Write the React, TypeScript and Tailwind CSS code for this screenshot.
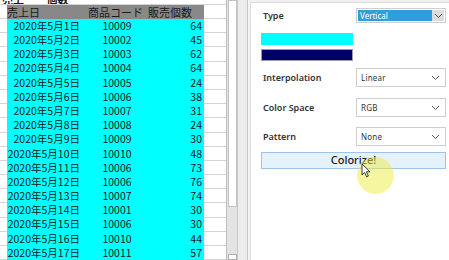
import React from "react";

const rows: [number, string, number][] = [
  [1, "10009", 64],
  [2, "10002", 45],
  [3, "10003", 62],
  [4, "10004", 64],
  [5, "10005", 24],
  [6, "10006", 38],
  [7, "10007", 31],
  [8, "10008", 24],
  [9, "10009", 30],
  [10, "10010", 48],
  [11, "10006", 73],
  [12, "10006", 76],
  [13, "10007", 74],
  [14, "10001", 30],
  [15, "10006", 30],
  [16, "10010", 44],
  [17, "10011", 57],
];

const jp = "font-['MS_PGothic','Noto_Sans_CJK_JP',sans-serif]";
const ui = "font-['Noto_Sans','Open_Sans',sans-serif]";

function Chevron() {
  return (
    <svg width="9" height="6" viewBox="0 0 9 6" className="shrink-0">
      <path d="M1 1l3.5 3.5L8 1" fill="none" stroke="#555" strokeWidth="1" />
    </svg>
  );
}

function Select({ value }: { value: string }) {
  return (
    <div className="w-[90px] h-[19px] border border-[#cfcfcf] bg-white flex items-center justify-between pl-[4px] pr-[5px]">
      <span className="text-[8px] text-[#333] tracking-[0.2px]">{value}</span>
      <Chevron />
    </div>
  );
}

function Sheet() {
  return (
    <div className={`w-[226px] h-[260px] flex flex-col text-[10.5px] text-[#1a1a1a] whitespace-nowrap ${jp}`}>
      {/* partially visible title row */}
      <div className="h-[5px] shrink-0 overflow-hidden relative border-b border-[#d4d4d4]">
        <div className="absolute left-[2px] bottom-[-1px] leading-[11px] font-bold text-[11px]">
          売上 <span className="ml-[20px]">個数</span>
        </div>
      </div>
      <div className="h-[14px] shrink-0 flex">
        <div className="w-[7px] border-b border-[#d4d4d4]" />
        <div className="w-[197px] bg-[#888888] flex items-center leading-none text-[11px]">
          <span className="w-[79px]">売上日</span>
          <span className="w-[62px] pl-[2px]">商品コード</span>
          <span className="flex-1">販売個数</span>
        </div>
        <div className="w-[22px] border-b border-[#d4d4d4]" />
      </div>
      {rows.map(([d, code, n]) => (
        <div key={d} className="h-[14.2px] shrink-0 flex leading-none">
          <div className="w-[7px] border-b border-[#d4d4d4]" />
          <div className="w-[197px] bg-[#00ffff] flex items-center">
            <span className="w-[79px] text-right pr-[6px]">2020年5月{d}日</span>
            <span className="w-[62px] text-center">{code}</span>
            <span className="flex-1 text-right pr-[2px]">{n}</span>
          </div>
          <div className="w-[22px] border-b border-[#d4d4d4]" />
        </div>
      ))}
    </div>
  );
}

function Scrollbars() {
  return (
    <div className="flex h-[260px] border-l border-[#bdbdbd]">
      <div className="w-[10px] bg-[#e3e3e3] flex flex-col justify-between pl-[1px]">
        <div className="h-[207px] w-[9px] bg-white border border-[#c4c4c4]" />
        <div className="h-[6px] w-[9px] bg-white border border-[#b0b0b0]" />
      </div>
      <div className="w-[11px] bg-[#ececec] border-l border-[#c8c8c8] border-r" />
      <div className="w-[2px] bg-[#f4f4f4]" />
    </div>
  );
}

function Panel() {
  return (
    <div className={`flex-1 h-[260px] pt-[2px] bg-[#f0f0f0] ${ui}`}>
      <div className="h-full bg-white border-t border-l border-[#dcdcdc] pl-[10px] pr-[4px] pt-[5px] relative">
        <div className="flex items-center justify-between h-[15px]">
          <span className="pl-[2px] text-[9px] font-semibold text-[#333]">Type</span>
          <div className="w-[90px] h-[15px] border border-[#cfcfcf] flex items-center p-[1px]">
            <div className="flex-1 h-full bg-[#2f9fdb] text-white text-[8px] leading-none flex items-center pl-[2px]">
              Vertical
            </div>
            <div className="w-[12px] h-full bg-[#dcdcdc] flex items-center justify-center">
              <Chevron />
            </div>
          </div>
        </div>
        <div className="mt-[10px] w-[92px] h-[12px] bg-[#00ffff]" />
        <div className="mt-[4px] w-[92px] h-[12px] bg-[#000066] border border-[#9a9ab0]" />
        <div className="mt-[7px] flex items-center justify-between h-[19px]">
          <span className="pl-[2px] text-[9px] font-semibold text-[#333]">Interpolation</span>
          <Select value="Linear" />
        </div>
        <div className="mt-[11px] flex items-center justify-between h-[19px]">
          <span className="pl-[2px] text-[9px] font-semibold text-[#333]">Color Space</span>
          <Select value="RGB" />
        </div>
        <div className="mt-[10px] flex items-center justify-between h-[19px]">
          <span className="pl-[2px] text-[9px] font-semibold text-[#333]">Pattern</span>
          <Select value="None" />
        </div>
        <div className="mt-[6px] w-[185px] h-[17px] bg-[#e5f1fb] border border-[#9fc3e6] flex items-center justify-center text-[11px] font-medium text-[#1a1a1a]">
          Colorize!
        </div>
        {/* click highlight + cursor */}
        <div className="absolute left-[106px] top-[154px] w-[37px] h-[37px] rounded-full bg-[#eeee44]/50" />
        <svg className="absolute left-[110px] top-[160px]" width="10" height="15" viewBox="0 0 10 15">
          <path d="M1 1v11l2.6-2.5 2 4.3 1.8-.8-2-4.2H9z" fill="#fff" stroke="#222" strokeWidth="0.9" strokeLinejoin="round" />
        </svg>
      </div>
    </div>
  );
}

export default function App() {
  return (
    <div className="w-[449px] h-[260px] flex overflow-hidden bg-white">
      <Sheet />
      <Scrollbars />
      <Panel />
    </div>
  );
}
